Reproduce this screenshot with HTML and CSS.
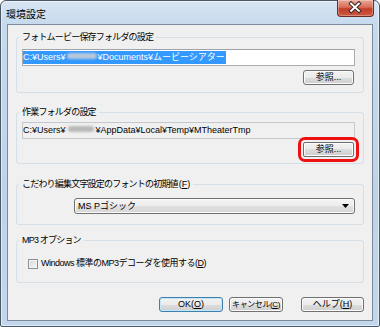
FILE: index.html
```html
<!DOCTYPE html>
<html lang="ja">
<head>
<meta charset="utf-8">
<title>環境設定</title>
<link rel="stylesheet" href="styles.css">
</head>
<body>
<div class="window">
  <div class="titlebar">
    <span class="title">環境設定</span>
    <div class="close">
      <svg width="37" height="17" viewBox="0 0 37 17">
        <path d="M14.5 4.5 L22.5 12 M22.5 4.5 L14.5 12" stroke="#3a2a2a" stroke-width="4" stroke-linecap="square" fill="none"/>
        <path d="M14.5 4.5 L22.5 12 M22.5 4.5 L14.5 12" stroke="#ffffff" stroke-width="2" stroke-linecap="square" fill="none"/>
      </svg>
    </div>
  </div>
  <div class="client">
    <fieldset class="group g1">
      <legend>フォトムービー保存フォルダの設定</legend>
      <div class="field"><span class="sel">C:¥Users¥<span class="blur blur-sel"></span>¥Documents¥ムービーシアター</span></div>
      <div class="row-end"><button class="btn browse">参照...</button></div>
    </fieldset>
    <fieldset class="group g2">
      <legend>作業フォルダの設定</legend>
      <div class="field readonly"><span class="plain">C:¥Users¥<span class="blur"></span>¥AppData¥Local¥Temp¥MTheaterTmp</span></div>
      <div class="row-end"><button class="btn browse highlight">参照...</button></div>
    </fieldset>
    <fieldset class="group g3">
      <legend>こだわり編集文字設定のフォントの初期値<span class="mn">(<u>F</u>)</span></legend>
      <div class="combo">
        <span class="combo-text">MS Pゴシック</span>
        <svg class="arrow" width="7" height="4" viewBox="0 0 7 4"><path d="M0 0 H7 L3.5 4 Z" fill="#000"/></svg>
      </div>
    </fieldset>
    <fieldset class="group g4">
      <legend>MP3 オプション</legend>
      <label class="check-row"><span class="check"></span><span class="check-label">Windows 標準のMP3デコーダを使用する(<u>D</u>)</span></label>
    </fieldset>
    <div class="actions">
      <button class="btn ok">OK(<u>O</u>)</button>
      <button class="btn cancel">キャンセル(<u>C</u>)</button>
      <button class="btn help">ヘルプ(<u>H</u>)</button>
    </div>
  </div>
</div>
</body>
</html>
```
FILE: styles.css
```css
* { box-sizing: border-box; }

body {
  margin: 0;
  background: #ffffff;
  font-family: "Liberation Sans", "Noto Sans CJK JP", sans-serif;
  font-size: 9px;
  color: #000;
}

.window {
  width: 380px;
  height: 327px;
  display: flex;
  flex-direction: column;
  border: 1px solid #4b5866;
  border-radius: 6px 6px 2px 2px;
  background: linear-gradient(#d8e5f3, #c6d9ed 24px, #bed3ea 60%, #c2d6ec);
  padding: 0 6px 5px;
  box-shadow: inset 0 0 0 1px rgba(255, 255, 255, 0.55);
}

.titlebar {
  height: 23px;
  display: flex;
  align-items: flex-start;
}

.title {
  font-family: "Noto Sans CJK JP", sans-serif;
  font-size: 10px;
  line-height: 12px;
  margin-top: 7px;
  margin-left: -1px;
  color: #000;
}

.close {
  margin-left: auto;
  margin-top: -1px;
  margin-right: -1px;
  width: 37px;
  height: 17px;
  border: 1px solid #6e2b22;
  border-top: none;
  border-radius: 0 0 4px 4px;
  background: linear-gradient(#e9a898, #d86e58 45%, #c23d27 55%, #cc5a40);
  box-shadow: inset 0 0 0 1px rgba(255, 255, 255, 0.3);
  display: flex;
}

.close svg { margin: -1px 0 0 -1px; }

.client {
  flex: 1;
  background: #f0f0f0;
  border: 1px solid #7d8c9c;
  display: flex;
  flex-direction: column;
  padding-top: 7px;
}

.group {
  margin: 0 8px;
  border: 1px solid #d5dfe5;
  border-radius: 3px;
  padding: 6px 8px 7px 5px;
  min-width: 0;
}

.group legend {
  padding: 0 3px;
  margin-left: -3px;
  line-height: 11px;
  font-size: 9px;
  letter-spacing: -0.8px;
  white-space: nowrap;
}

.group legend .mn { letter-spacing: 0; margin-left: 1px; }

.g2 { margin-top: 14px; padding-top: 4px; padding-bottom: 6px; }
.g3 { margin-top: 15px; padding-top: 8px; padding-bottom: 10px; }
.g4 { margin-top: 10px; padding-top: 12px; padding-bottom: 13px; }

.field {
  height: 17px;
  border: 1px solid #abadb3;
  border-top-color: #a0a3aa;
  background: #ffffff;
  display: flex;
  align-items: center;
  white-space: nowrap;
  overflow: hidden;
}

.field.readonly {
  background: #f0f0f0;
  border-color: #c4c8ce;
}

.sel {
  background: #3399ff;
  color: #ffffff;
  line-height: 13px;
  padding-right: 1px;
}

.plain { line-height: 13px; }

.blur {
  display: inline-block;
  width: 26px;
  height: 6px;
  margin: 0 2px;
  vertical-align: 1px;
  background: #b9b9b9;
  border-radius: 3px;
  filter: blur(1px);
}

.blur-sel { background: #b8c8dc; width: 30px; margin: 0 1px; }

.row-end {
  display: flex;
  justify-content: flex-end;
  margin-top: 4px;
}

.g2 .row-end { margin-top: 3px; }

.btn {
  height: 15px;
  border: 1px solid #707070;
  border-radius: 3px;
  background: linear-gradient(#f2f2f2 0%, #ebebeb 50%, #dddddd 50%, #cfcfcf 100%);
  box-shadow: inset 0 0 0 1px #fbfbfb;
  font-family: "Liberation Sans", "Noto Sans CJK JP", sans-serif;
  font-size: 9px;
  line-height: 13px;
  padding: 0;
  color: #000;
  white-space: nowrap;
  overflow: hidden;
}

.btn u { text-underline-offset: 1px; }

.browse { width: 51px; margin-right: 1px; }

.highlight {
  border-radius: 2px;
  outline: 3px solid #ee1111;
  outline-offset: 2px;
}

.combo {
  margin-left: 52px;
  width: 281px;
  height: 16px;
  border: 1px solid #707070;
  border-radius: 3px;
  background: linear-gradient(#f4f4f4, #ececec 50%, #e0e0e0 50%, #d6d6d6);
  box-shadow: inset 0 0 0 1px #fbfbfb;
  display: flex;
  align-items: center;
  padding: 0 4px 0 3px;
}

.combo-text { line-height: 12px; }

.arrow { margin-left: auto; margin-right: 1px; }

.check-row {
  display: flex;
  align-items: center;
  height: 11px;
}

.check {
  width: 10px;
  height: 10px;
  margin: 0 3px 0 6px;
  border: 1px solid #8e8f8f;
  background: linear-gradient(135deg, #d6d6d6, #f8f8f8);
  box-shadow: inset 0 0 0 1px #f2f2f2;
}

.check-label { letter-spacing: -0.5px; line-height: 11px; }

.actions {
  display: flex;
  justify-content: flex-end;
  margin-top: 14px;
  padding-right: 8px;
}

.ok {
  width: 64px;
  margin-right: 6px;
  border-color: #3c7fb1;
  box-shadow: inset 0 0 0 1px #c4e5f6;
}

.cancel { width: 54px; margin-right: 18px; font-size: 8px; letter-spacing: -0.4px; }

.help { width: 63px; }
```
